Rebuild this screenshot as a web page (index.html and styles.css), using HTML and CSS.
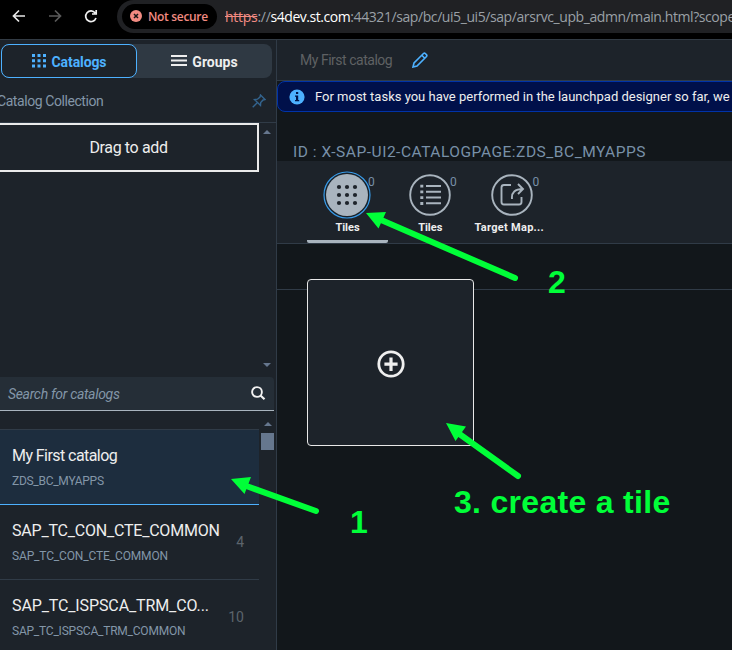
FILE: index.html
```html
<!DOCTYPE html>
<html lang="en">
<head>
<meta charset="utf-8">
<title>Launchpad Designer</title>
<link rel="stylesheet" href="styles.css">
</head>
<body>
<header class="browser">
  <svg class="nav" width="117" height="33" viewBox="0 0 117 33" fill="none" stroke-width="1.7">
    <path d="M25 16H14M19 10.5L13.5 16L19 21.5" stroke="#e8e8e8"/>
    <path d="M49 16H60M55 10.5L60.5 16L55 21.5" stroke="#5b5b5b"/>
    <path d="M95.2 13A5.3 5.3 0 1 0 96 18M96.2 10V14H92" stroke="#f1f1f1"/>
  </svg>
  <div class="address">
    <span class="security">
      <svg width="12" height="12" viewBox="0 0 12 12"><circle cx="6" cy="6" r="6" fill="#f28b82"/><path d="M4 4L8 8M8 4L4 8" stroke="#161616" stroke-width="1.5"/></svg>
      <span class="security-text">Not secure</span>
    </span>
    <span class="url"><s>https</s>://<b>s4dev.st.com</b><span class="path">:44321/sap/bc/ui5_ui5/sap/arsrvc_upb_admn/main.html?scope</span></span>
  </div>
</header>
<div class="app">
  <aside class="side">
    <div class="segmented">
      <div class="seg active">
        <svg width="15" height="14" viewBox="0 0 15 14" fill="#4db1ff"><path d="M0 0h3v3H0zM5.5 0h3v3h-3zM11 0h3v3h-3zM0 5.3h3v3H0zM5.5 5.3h3v3h-3zM11 5.3h3v3h-3zM0 10.6h3v3H0zM5.5 10.6h3v3h-3zM11 10.6h3v3h-3z"/></svg>
        <span class="seg-a">Catalogs</span>
      </div>
      <div class="seg">
        <svg width="16" height="12" viewBox="0 0 16 12" fill="#eee"><path d="M0 0h16v2H0zM0 4.5h16v2H0zM0 9h16v2H0z"/></svg>
        <span class="seg-b">Groups</span>
      </div>
    </div>
    <div class="collection">
      <span class="collection-text">Catalog Collection</span>
      <svg width="14" height="14" viewBox="0 0 14 14" fill="none" stroke="#33648f" stroke-width="1.4"><path d="M8.5 1L13 5.5L11 6L8.7 8.5L8.5 11.5L2.5 5.5L5.5 5.2L8 3zM5 9L.7 13.3"/></svg>
    </div>
    <div class="drop-area">
      <div class="drop"><span class="drop-text">Drag to add</span></div>
      <div class="rail"><i class="up"></i><i class="down"></i></div>
    </div>
    <div class="search">
      <span class="search-text">Search for catalogs</span>
      <svg width="15" height="15" viewBox="0 0 15 15" fill="none" stroke="#f2f2f2"><circle cx="6" cy="6" r="4.9" stroke-width="1.9"/><path d="M9.5 9.5L13.5 13.3" stroke-width="2.2"/></svg>
    </div>
    <div class="list-area">
      <div class="list">
        <div class="item selected"><div><p class="name n1">My First catalog</p><p class="id i1">ZDS_BC_MYAPPS</p></div></div>
        <div class="item"><div><p class="name n2">SAP_TC_CON_CTE_COMMON</p><p class="id i2">SAP_TC_CON_CTE_COMMON</p></div><span class="count">4</span></div>
        <div class="item"><div><p class="name n3">SAP_TC_ISPSCA_TRM_CO...</p><p class="id i3">SAP_TC_ISPSCA_TRM_COMMON</p></div><span class="count">10</span></div>
      </div>
      <div class="rail list-rail"><i class="up"></i><span class="thumb"></span></div>
    </div>
  </aside>
  <main class="main">
    <div class="title">
      <span class="title-text">My First catalog</span>
      <svg width="16" height="16" viewBox="0 0 16 16" fill="none" stroke="#4db1ff" stroke-width="1.6"><path d="M1 15L2 11L11.5 1.500Q12.500.7 13.500 1.700L14.400 2.600Q15.300 3.500 14.500 4.500L5 14zM9.800 3.200L12.800 6.200"/></svg>
    </div>
    <div class="banner">
      <svg width="16" height="16" viewBox="0 0 16 16"><circle cx="8" cy="8" r="7.6" fill="#4db1ff"/><path d="M7 3h2.2v2H7zM6 6.5h3.2V11H10.2v1.2H6V11h1V7.7H6z" fill="#00144a"/></svg>
      <span class="banner-text">For most tasks you have performed in the launchpad designer so far, we</span>
    </div>
    <div class="page-id"><span class="page-id-text">ID : X-SAP-UI2-CATALOGPAGE:ZDS_BC_MYAPPS</span></div>
    <nav class="tabs">
      <div class="tab current">
        <svg width="48" height="48" viewBox="0 0 48 48"><circle cx="24" cy="24" r="23" fill="#18222b" stroke="#399be8" stroke-width="1.2"/><circle cx="24" cy="24" r="21" fill="#a9b4be"/><g fill="#1d232a"><circle cx="16" cy="16" r="2.1"/><circle cx="24" cy="16" r="2.1"/><circle cx="32" cy="16" r="2.1"/><circle cx="16" cy="24" r="2.1"/><circle cx="24" cy="24" r="2.1"/><circle cx="32" cy="24" r="2.1"/><circle cx="16" cy="32" r="2.1"/><circle cx="24" cy="32" r="2.1"/><circle cx="32" cy="32" r="2.1"/></g></svg>
        <span class="badge">0</span><span class="label">Tiles</span>
      </div>
      <div class="tab">
        <svg width="48" height="48" viewBox="0 0 48 48" fill="none" stroke="#a9b4be" stroke-width="1.9"><circle cx="24" cy="24" r="19.8"/><path d="M20 15H35M20 20.7H35M20 26.5H35M20 32.3H35"/><path d="M14.3 15.2H17.3M14.3 20.9H17.3M14.3 26.7H17.3M14.3 32.5H17.3" stroke-width="2.8"/></svg>
        <span class="badge">0</span><span class="label">Tiles</span>
      </div>
      <div class="tab">
        <svg width="48" height="48" viewBox="0 0 48 48" fill="none" stroke="#a9b4be" stroke-width="1.9"><circle cx="24" cy="24" r="19.8"/><path d="M23 14H16Q13.5 14 13.5 16.5V31Q13.5 33.5 16 33.5H31Q33.5 33.5 33.5 31V26M24 28Q23 18 35 18M30 13L35 18L30 23"/></svg>
        <span class="badge">0</span><span class="label wide">Target Map...</span>
      </div>
    </nav>
    <section class="canvas">
      <div class="tile"><svg width="28" height="28" viewBox="0 0 28 28" fill="none" stroke="#efefef" stroke-width="2.8"><circle cx="14" cy="14" r="12.2"/><path d="M7.4 14.2H20.6M14 7.5V20.9" stroke-width="3.2"/></svg></div>
    </section>
  </main>
</div>
<div class="notes">
  <svg width="732" height="650" viewBox="0 0 732 650"><g stroke="#00ff38" stroke-width="6" stroke-linecap="round"><path d="M316 511L245 485.500M515 278L380 219.500M518 476L458 433"/></g><g fill="#00ff38"><path d="M231 479L251 477L244.500 494ZM366 213L386 212L378.500 228.500ZM446 423L466 426.500L455.500 441Z"/></g></svg>
  <span class="note note-1">1</span><span class="note note-2">2</span><span class="note note-3">3. create a tile</span>
</div>
</body>
</html>
```

FILE: styles.css
```css
* { box-sizing: border-box; }
body { margin: 0; width: 732px; height: 650px; overflow: hidden; background: #12171b; font-family: Roboto, "Liberation Sans", sans-serif; color: #eee; white-space: nowrap; }
p { margin: 0; }
svg { display: block; flex: none; }
.browser { display: flex; height: 39px; background: #000; }
.address { display: flex; align-items: center; flex: 1; height: 33px; background: #202124; border-radius: 17px 0 0 17px; padding: 0 0 1px 5px; overflow: hidden; }
.security { display: flex; align-items: center; flex: none; gap: 6px; width: 95px; height: 25px; padding-left: 8px; border-radius: 13px; background: #000; color: #f28b82; font: 600 12px "Open Sans", sans-serif; letter-spacing: -.35px; }
.security-text { letter-spacing: -.35px; }
.security { letter-spacing: 0; }
.security-text { letter-spacing: -.32px; }
.url { margin-left: 8px; font: 14px "Open Sans", sans-serif; letter-spacing: -.28px; color: #9aa0a6; }
.url s { color: #f28b82; }
.url b { font-weight: 400; letter-spacing: -.45px; color: #fff; }
.path { letter-spacing: -.42px; }
.app { display: flex; height: 611px; border-top: 1px solid #323b44; }
.side { width: 277px; border-right: 1px solid #303b47; background: #1d232a; }
.segmented { display: flex; width: 271px; height: 34px; margin: 4px 0 0 1px; background: #2f3943; border-radius: 8px; }
.seg { display: flex; flex: 1; align-items: center; justify-content: center; gap: 5px; font-size: 14px; font-weight: 700; padding-top: 1px; }
.seg svg { margin-top: -2px; }
.seg-a { letter-spacing: -.1px; }
.seg.active { flex: 0 0 136px; border: 1px solid #4db1ff; border-radius: 8px; background: #1d232a; color: #4db1ff; }
.collection { display: flex; align-items: center; justify-content: space-between; height: 45px; padding: 2px 10px 0 0; border-bottom: 1px solid #303b47; color: #8396a8; font-size: 14px; }
.collection-text { margin-left: -3px; letter-spacing: -.43px; }
.drop-area { display: flex; height: 254px; }
.drop { display: flex; align-items: center; justify-content: center; width: 259px; height: 49px; border: 2px solid #eaeaea; border-left: 0; font-size: 16px; }
.drop-text { letter-spacing: -.37px; }
.rail { display: flex; flex-direction: column; justify-content: space-between; align-items: center; width: 17px; padding: 7px 1px 10px 0; }
.up, .down { border: 4px solid transparent; border-top: 0; border-bottom-color: #66778e; }
.down { transform: rotate(180deg); }
.search { display: flex; align-items: center; justify-content: space-between; width: 274px; height: 34px; padding: 0 8px 0 8px; border-bottom: 1px solid #a9b4be; border-radius: 0 4px 0 0; background: #252e37; color: #8396a8; font-size: 14px; font-style: italic; }
.search-text { padding-top: 1px; letter-spacing: -.32px; }
.list-area { display: flex; height: 239px; padding-top: 18px; }
.list { width: 259px; }
.item { display: flex; justify-content: space-between; height: 75px; padding: 16px 15px 0 12px; border-bottom: 1px solid #303b47; }
.item.selected { height: 76px; border-top: 1px solid #303b47; border-bottom-color: #4db1ff; background: #1d2d3e; }
.name { height: 19px; line-height: 19px; font-size: 16px; }
.id { margin-top: 9px; height: 14px; line-height: 14px; font-size: 12px; color: #8396a8; }
.n1 { letter-spacing: -.56px; }
.n2 { letter-spacing: -.21px; }
.n3 { letter-spacing: -.12px; }
.i1 { letter-spacing: -.28px; }
.i2 { letter-spacing: -.15px; }
.i3 { letter-spacing: -.22px; }
.count { margin-top: 13px; height: 17px; line-height: 17px; font-size: 14px; color: #5c646c; }
.list-rail { justify-content: flex-start; margin-top: -18px; padding-top: 11px; padding-left: 1px; }
.thumb { width: 13px; height: 17px; margin-top: 7px; background: #66778e; }
.main { flex: 1; min-width: 0; }
.title { display: flex; align-items: center; gap: 20px; height: 41px; padding-left: 23px; border-bottom: 1px solid #303b47; background: #1d232a; color: #5f6163; font-size: 14px; }
.title-text { letter-spacing: -.48px; }
.banner { display: flex; align-items: center; gap: 10px; width: 480px; height: 31px; padding-left: 11px; border: 1px solid #0033a8; border-radius: 8px; background: #00104a; font-size: 13px; }
.page-id { display: flex; align-items: flex-end; height: 49px; padding: 0 0 0 16px; font-size: 15px; line-height: 17px; letter-spacing: .8px; color: #7890a8; }
.page-id-text { font-size: 15.500px; letter-spacing: .52px; }
.tabs { display: flex; height: 83px; padding: 10px 0 0 29px; border-bottom: 1px solid #303b47; background: #1d232a; }
.tab { position: relative; display: flex; flex-direction: column; align-items: center; width: 82.500px; height: 72px; }
.tab svg { margin-left: -1px; }
.current { border-bottom: 3px solid #a9b4be; border-radius: 2px; width: 81px; margin: 0 1px; }
.badge { position: absolute; left: 61px; top: 4px; font-size: 12px; line-height: 15px; color: #7890a8; }
.label { line-height: 18px; font-size: 11px; font-weight: 700; }
.wide { margin-left: -7px; letter-spacing: .3px; }
.canvas { height: 46px; padding: 35px 30px 0; border-bottom: 1px solid #303b47; }
.tile { position: relative; display: flex; align-items: center; justify-content: center; width: 167px; height: 167px; padding-top: 3px; background: #1d232a; border: 1px solid #e8e8e8; border-radius: 4px; }
.notes { position: absolute; inset: 0; pointer-events: none; }
.note { position: absolute; color: #00ff38; font: bold 32px/36px "Liberation Sans", sans-serif; }
.note-1 { left: 350px; top: 504px; }
.note-2 { left: 548px; top: 264px; }
.note-3 { left: 454px; top: 484px; letter-spacing: .3px; }
```
